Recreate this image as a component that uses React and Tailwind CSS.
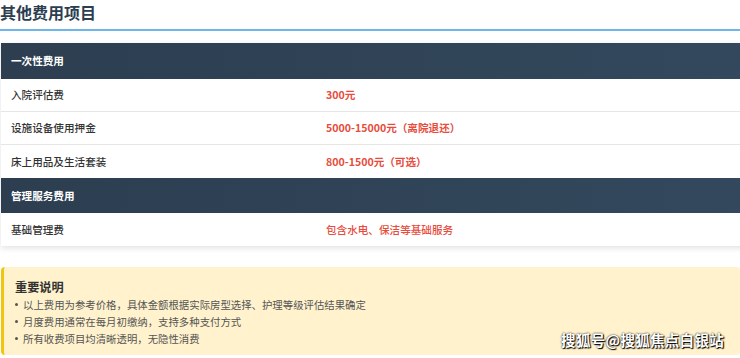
import React from 'react';

const font = { fontFamily: '"Noto Sans CJK SC", "Noto Sans", sans-serif' };

const sections = [
  {
    title: '一次性费用',
    rows: [
      { name: '入院评估费', price: '300元', bold: true },
      { name: '设施设备使用押金', price: '5000-15000元（离院退还）', bold: true },
      { name: '床上用品及生活套装', price: '800-1500元（可选）', bold: true },
    ],
  },
  {
    title: '管理服务费用',
    rows: [{ name: '基础管理费', price: '包含水电、保洁等基础服务', bold: false }],
  },
];

const notes = [
  '以上费用为参考价格，具体金额根据实际房型选择、护理等级评估结果确定',
  '月度费用通常在每月初缴纳，支持多种支付方式',
  '所有收费项目均清晰透明，无隐性消费',
];

function FeeTable() {
  return (
    <div className="ml-[1px] w-[790px] bg-white shadow-[0_2px_6px_rgba(0,0,0,0.12)]">
      {sections.map((section, i) => (
        <div key={section.title}>
          <div
            className={`flex items-center bg-gradient-to-r from-[#2c3e50] to-[#34495e] px-[10px] text-[10.6px] font-bold text-white ${
              i === 0 ? 'h-[36px]' : 'h-[35px]'
            }`}
          >
            {section.title}
          </div>
          {section.rows.map((row, j) => (
            <div
              key={row.name}
              className={`flex h-[33px] items-center text-[10.6px] ${
                j < section.rows.length - 1 ? 'border-b border-[#e6e6e6]' : ''
              }`}
            >
              <div className="w-[316px] pl-[10px] font-medium text-[#333]">{row.name}</div>
              <div className={`pl-[9px] text-[#e74c3c] ${row.bold ? 'font-bold' : 'font-medium'}`}>
                {row.price}
              </div>
            </div>
          ))}
        </div>
      ))}
    </div>
  );
}

function NoteBox() {
  return (
    <div className="relative mt-[21px] ml-[1px] h-[88px] rounded-[4px] border-l-[3px] border-[#f1c40f] bg-[#fff2cc] pl-[11px] pt-[12px]">
      <div className="text-[12.2px] font-bold leading-[16px] text-[#333]">重要说明</div>
      <ul className="mt-[1px] text-[10.4px] leading-[17px] text-[#555]">
        {notes.map((note) => (
          <li key={note} className="flex items-center">
            <span className="mr-[5px] h-[3px] w-[3px] shrink-0 rounded-full bg-[#555]" />
            <span>{note}</span>
          </li>
        ))}
      </ul>
      <div className="absolute right-[16px] bottom-[4px] text-[14.5px] font-bold tracking-[0.3px] text-white [text-shadow:0_0_2px_#000,1px_1px_1px_#000]">
        搜狐号@搜狐焦点白银站
      </div>
    </div>
  );
}

export default function App() {
  return (
    <div className="h-[358px] w-[740px] overflow-hidden bg-white" style={font}>
      <h2 className="h-[29px] pt-[1px] text-[16px] font-bold leading-[22px] text-[#2c3e50]">其他费用项目</h2>
      <div className="h-[2px] w-full bg-[#6cb6e8]" />
      <div className="mt-[12px]">
        <FeeTable />
      </div>
      <NoteBox />
    </div>
  );
}
